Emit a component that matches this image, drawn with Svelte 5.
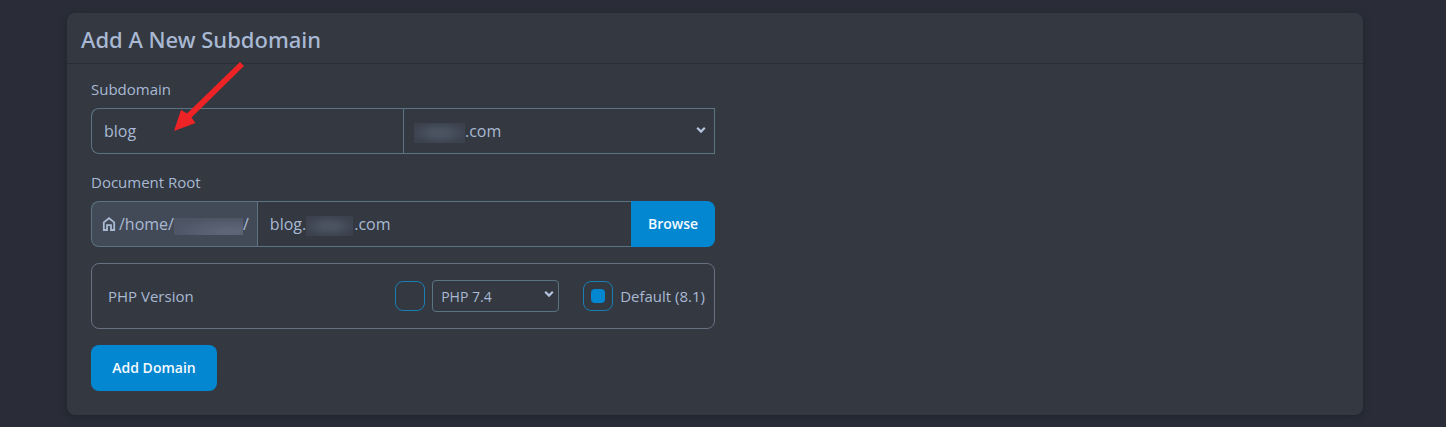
<script lang="ts">
  type PhpMode = 'custom' | 'default';

  // em spaces keep room for the part of the name that is masked
  const HIDDEN = '\u2003\u2003\u2003';

  let subdomain = $state('blog');
  let domain = $state('.com');
  let docRoot = $state(`blog.${HIDDEN}.com`);
  let phpMode = $state<PhpMode>('default');
  let phpVersion = $state('7.4');

  const domains = ['.com'];
  const phpVersions = ['7.4', '8.0', '8.1', '8.2'];

  function onSubmit(e: Event) {
    e.preventDefault();
  }
</script>

{#snippet chevron()}
  <svg class="chevron" viewBox="0 0 10 8" aria-hidden="true">
    <path d="M1.2 1.8 L5 5.6 L8.8 1.8" />
  </svg>
{/snippet}

<main class="page">
  <section class="card">
    <header class="card-header">
      <h1>Add A New Subdomain</h1>
    </header>

    <form class="card-body" onsubmit={onSubmit}>
      <div class="field">
        <label for="subdomain">Subdomain</label>
        <div class="group">
          <input id="subdomain" class="control sub" type="text" bind:value={subdomain} />
          <div class="select-wrap">
            <select class="control domain" aria-label="Domain" bind:value={domain}>
              {#each domains as d}
                <option value={d}>{d}</option>
              {/each}
            </select>
            <span class="mask mask-domain"></span>
            {@render chevron()}
          </div>
          <svg class="arrow" viewBox="0 0 72 72" aria-hidden="true">
            <path d="M67 0 L71 4 L18.5 55.5 L22.5 61 L1 69 L8 48 L14 51.5 Z" />
          </svg>
        </div>
      </div>

      <div class="field">
        <label for="doc-root">Document Root</label>
        <div class="group">
          <span class="prefix">
            <svg class="home" viewBox="0 0 14 14" aria-hidden="true">
              <path d="M1.8 13 V5.4 L7 1.2 L12.2 5.4 V13 H9 V8.2 H5 V13 Z" />
            </svg>
            /home/<span class="mask mask-user"></span>/
          </span>
          <div class="root-wrap">
            <input id="doc-root" class="control root" type="text" bind:value={docRoot} />
            <span class="mask mask-root"></span>
          </div>
          <button class="btn browse" type="button">Browse</button>
        </div>
      </div>

      <div class="php">
        <span class="php-title">PHP Version</span>
        <input
          class="radio"
          type="radio"
          name="php"
          value="custom"
          aria-label="Custom PHP version"
          bind:group={phpMode}
        />
        <div class="select-wrap version-wrap">
          <select class="control version" aria-label="PHP version" bind:value={phpVersion}>
            {#each phpVersions as v}
              <option value={v}>PHP {v}</option>
            {/each}
          </select>
          {@render chevron()}
        </div>
        <label class="php-default">
          <input class="radio" type="radio" name="php" value="default" bind:group={phpMode} />
          Default (8.1)
        </label>
      </div>

      <button class="btn submit" type="submit">Add Domain</button>
    </form>
  </section>
</main>

<style>
  :global(body) {
    margin: 0;
    background: #2a2d38;
  }

  .page,
  .page :is(input, select, button) {
    box-sizing: border-box;
    font-family: 'Open Sans', 'Noto Sans', sans-serif;
    color: #a9b9d3;
  }

  .page {
    padding: 13px 83px 12px 67px;
    font-size: 15px;
    line-height: 24px;
  }

  .card {
    background: #333841;
    border-radius: 8px;
    box-shadow: 0 2px 6px rgba(20, 28, 36, 0.5);
  }

  .card-header {
    padding: 11px 14px 9px;
    border-bottom: 1px solid #282e37;
  }

  h1 {
    margin: 0;
    font-family: 'Noto Sans', 'Open Sans', sans-serif;
    font-size: 22px;
    font-weight: 500;
    line-height: 30px;
  }

  .card-body {
    display: flex;
    flex-direction: column;
    gap: 16px;
    padding: 13px 24px 24px;
  }

  .field,
  .php {
    box-sizing: border-box;
    width: 50%;
  }

  .field {
    display: flex;
    flex-direction: column;
    gap: 7px;
  }

  .group {
    position: relative;
    display: flex;
    height: 46px;
    font-size: 16px;
  }

  .control {
    height: 100%;
    margin: 0;
    padding: 0 12px;
    appearance: none;
    background: transparent;
    border: 1px solid #5b7482;
    border-radius: 0;
    outline: none;
    font-size: 16px;
  }

  .sub {
    width: 50%;
    border-right: 0;
    border-radius: 8px 0 0 8px;
  }

  .select-wrap {
    position: relative;
    width: 50%;
  }

  .domain,
  .root {
    width: 100%;
  }

  .page .domain {
    padding-left: 61px;
  }

  .chevron {
    position: absolute;
    top: 18px;
    right: 9px;
    width: 10px;
    height: 8px;
    fill: none;
    stroke: #b4c4de;
    stroke-width: 2.2;
    pointer-events: none;
  }

  .mask {
    background: radial-gradient(ellipse at center, #4b5361 20%, #3b414d 80%);
  }

  .mask-domain,
  .mask-root {
    position: absolute;
    top: 15px;
    height: 20px;
    pointer-events: none;
  }

  .mask-domain {
    left: 11px;
    width: 51px;
  }

  .mask-root {
    left: 49px;
    width: 47px;
  }

  .mask-user {
    width: 69px;
    height: 17px;
    margin-top: 4px;
    background: radial-gradient(ellipse at 80% 80%, #5d6577 10%, #4d5565 75%);
  }

  .prefix {
    box-sizing: border-box;
    display: flex;
    align-items: center;
    padding: 0 8px 0 10px;
    background: #424957;
    border: 1px solid #5b7482;
    border-right: 0;
    border-radius: 8px 0 0 8px;
  }

  .home {
    width: 14px;
    height: 14px;
    margin-right: 3px;
    fill: none;
    stroke: #a9b9d3;
    stroke-width: 1.8;
  }

  .root-wrap {
    position: relative;
    flex: 1;
  }

  .root {
    border-right: 0;
  }

  .page .btn {
    height: 46px;
    padding: 0 0 1px;
    background: #0387d1;
    border: 0;
    border-radius: 8px;
    color: #f4faff;
    font-size: 14px;
    font-weight: 600;
    cursor: pointer;
  }

  .page .browse {
    width: 84px;
    border-radius: 0 8px 8px 0;
  }

  .submit {
    align-self: flex-start;
    width: 126px;
  }

  .php {
    display: flex;
    align-items: center;
    padding: 16px 9px 16px 16px;
    border: 1px solid #667080;
    border-radius: 8px;
  }

  .php-title {
    flex: 1;
  }

  .radio {
    display: grid;
    place-content: center;
    width: 30px;
    height: 30px;
    margin: 0 7px 0 0;
    appearance: none;
    border: 1px solid #1b7db5;
    border-radius: 8px;
  }

  .radio:checked::before {
    content: '';
    width: 14px;
    height: 14px;
    background: #0387d1;
    border-radius: 4px;
  }

  .version-wrap {
    flex: none;
    width: 127px;
    height: 32px;
    margin-right: 24px;
  }

  .version {
    width: 100%;
    padding: 0 8px;
    border-radius: 4px;
    font-size: 14px;
  }

  .version-wrap .chevron {
    top: 10px;
    right: 5px;
  }

  .php-default {
    display: flex;
    align-items: center;
  }

  .arrow {
    position: absolute;
    top: -46px;
    left: 82px;
    width: 72px;
    height: 72px;
    fill: #ee2326;
    pointer-events: none;
  }
</style>
